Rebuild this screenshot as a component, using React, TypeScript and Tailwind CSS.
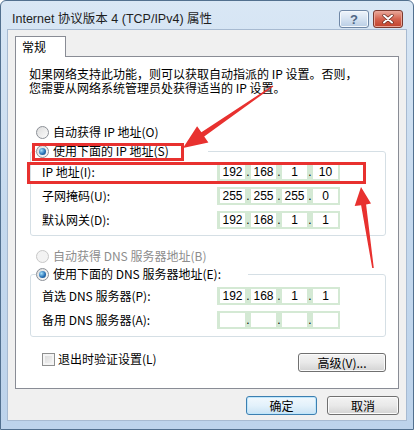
import React from "react";

function Radio({ checked, disabled }: { checked?: boolean; disabled?: boolean }) {
  return (
    <span
      className={
        disabled
          ? "flex h-[13px] w-[13px] shrink-0 items-center justify-center rounded-full border border-[#c8c8c8] bg-[#f3f3f3]"
          : "flex h-[13px] w-[13px] shrink-0 items-center justify-center rounded-full border border-[#8b8f96] bg-linear-to-br from-[#dcdcdc] to-[#fcfcfc]"
      }
    >
      {checked && (
        <span className="h-[7px] w-[7px] rounded-full bg-[radial-gradient(circle_at_35%_35%,#a6e1fb,#2a74b8_55%,#0e3f73)]" />
      )}
    </span>
  );
}

function IpField({ parts }: { parts: string[] }) {
  return (
    <div className="flex h-[18px] w-[123px] bg-[#d4e9d4] py-[2px] pl-[3px] pr-[2px] font-['Liberation_Sans',sans-serif] text-[12px] leading-[14px]">
      {parts.map((p, i) => (
        <React.Fragment key={i}>
          {i > 0 && <span className="flex w-[6px] items-center justify-center">.</span>}
          <span className="flex w-[25px] items-center justify-center bg-white">{p}</span>
        </React.Fragment>
      ))}
    </div>
  );
}

function Row({ label, parts }: { label: string; parts: string[] }) {
  return (
    <div className="flex h-[18px] items-center">
      <span className="w-[175px] whitespace-nowrap">{label}</span>
      <IpField parts={parts} />
    </div>
  );
}

function WinButton({ children, primary, className }: { children: React.ReactNode; primary?: boolean; className: string }) {
  return (
    <button
      className={
        (primary
          ? "border-[#3c7fb1] bg-linear-to-b from-[#f1f8fd] via-[#e3f1fb] to-[#c9e3f4] shadow-[inset_0_0_0_1px_#bfe6fb] "
          : "border-[#707070] bg-linear-to-b from-[#f3f3f3] via-[#e9e9e9] to-[#d3d3d3] shadow-[inset_0_0_0_1px_#fbfbfb] ") +
        "flex items-center justify-center rounded-[3px] border text-[12px] leading-[14px] text-black " +
        className
      }
    >
      {children}
    </button>
  );
}

export default function App() {
  return (
    <div className="relative flex h-[430px] w-[414px] flex-col overflow-hidden rounded-t-[6px] border border-[#52708f] bg-linear-to-b from-[#d9e7f5] via-[#c5d9ee] to-[#bdd3eb] font-['Noto_Sans_CJK_SC',sans-serif] text-[12px] text-black">
      {/* title bar */}
      <div className="flex h-[29px] shrink-0 justify-between pl-[11px] pr-[10px]">
        <div className="mt-[11px] whitespace-nowrap font-['Liberation_Sans','Noto_Sans_CJK_SC',sans-serif] text-[12.5px] leading-[14px] text-[#1e1e1e]">
          Internet 协议版本 4 (TCP/IPv4) 属性
        </div>
        <div className="mt-[9px] flex h-[18px] gap-[4px]">
          <div className="flex w-[30px] items-center justify-center rounded-[3px] border border-[#6f87a6] bg-linear-to-b from-[#eef4fb] via-[#d5e2f1] to-[#b9cde4] font-['Liberation_Sans',sans-serif] text-[13px] font-bold leading-none text-[#4f6684] shadow-[inset_0_0_0_1px_#f4f8fc]">
            ?
          </div>
          <div className="flex w-[30px] items-center justify-center rounded-[3px] border border-[#7a3a30] bg-linear-to-b from-[#e9a99c] via-[#d4634f] to-[#c0402b] shadow-[inset_0_0_0_1px_#eaa598]">
            <svg width="12" height="10" viewBox="0 0 12 10">
              <path d="M2 1.5 L10 8.5 M10 1.5 L2 8.5" stroke="#5b2219" strokeWidth="3.2" strokeLinecap="round" />
              <path d="M2 1.5 L10 8.5 M10 1.5 L2 8.5" stroke="#ffffff" strokeWidth="2" strokeLinecap="round" />
            </svg>
          </div>
        </div>
      </div>

      {/* client area */}
      <div className="mx-[7px] flex h-[390px] shrink-0 flex-col bg-[#f0f0f0] shadow-[0_0_0_1px_#a7bad1]">
        <div className="pl-[7px] pt-[6px]">
          <div className="relative z-10 -mb-px flex h-[21px] w-[51px] items-center border border-b-0 border-[#898c95] bg-white px-[6px] leading-[14px]">
            常规
          </div>
        </div>

        <div className="mx-[7px] flex h-[333px] flex-col border border-[#898c95] bg-white pl-[13px] pr-[12px] pt-[10px] leading-[14px]">
          <p className="whitespace-nowrap leading-[14px]">
            如果网络支持此功能，则可以获取自动指派的 IP 设置。否则，
            <br />
            您需要从网络系统管理员处获得适当的 IP 设置。
          </p>

          <div className="ml-[7px] mt-[28px] flex h-[18px] items-center gap-[4px]">
            <Radio />
            <span>自动获得 IP 地址(O)</span>
          </div>

          <fieldset className="ml-[1px] mt-[1px] rounded-[3px] border border-[#d5dfe5] p-0 pb-[6px]">
            <legend className="relative ml-[5px] flex h-[18px] w-[172px] items-center gap-[4px]">
              <Radio checked />
              <span>使用下面的 IP 地址(S)</span>
              <div className="absolute -left-[4px] top-[1px] h-[18px] w-[152px] border-[3px] border-[#e8312f]" />
            </legend>
            <div className="mt-[3px] flex flex-col gap-[6px] pl-[11px]">
              <div className="relative">
                <Row label="IP 地址(I):" parts={["192", "168", "1", "10"]} />
                <div className="absolute -left-[15px] -top-[1px] h-[22px] w-[339px] border-[3px] border-[#e8312f]" />
              </div>
              <Row label="子网掩码(U):" parts={["255", "255", "255", "0"]} />
              <Row label="默认网关(D):" parts={["192", "168", "1", "1"]} />
            </div>
          </fieldset>

          <div className="ml-[7px] mt-[11px] flex h-[18px] items-center gap-[4px] text-[#8d8d8d]">
            <Radio disabled />
            <span>自动获得 DNS 服务器地址(B)</span>
          </div>

          <fieldset className="ml-[1px] rounded-[3px] border border-[#d5dfe5] p-0 pb-[7px]">
            <legend className="ml-[5px] flex h-[18px] w-[212px] items-center gap-[4px]">
              <Radio checked />
              <span className="whitespace-nowrap">使用下面的 DNS 服务器地址(E):</span>
            </legend>
            <div className="mt-[4px] flex flex-col gap-[6px] pl-[11px]">
              <Row label="首选 DNS 服务器(P):" parts={["192", "168", "1", "1"]} />
              <Row label="备用 DNS 服务器(A):" parts={["", "", "", ""]} />
            </div>
          </fieldset>

          <div className="mt-[13px] flex items-start justify-between">
            <div className="ml-[13px] flex h-[18px] items-center gap-[3px]">
              <span className="h-[13px] w-[13px] border border-[#8e8f8f] bg-linear-to-br from-[#d6d6d6] to-[#f8f8f8] shadow-[inset_0_0_0_2px_#f4f4f4]" />
              <span>退出时验证设置(L)</span>
            </div>
            <WinButton className="mt-[3px] h-[19px] w-[88px]">高级(V)...</WinButton>
          </div>
        </div>

        <div className="mt-[7px] flex justify-end gap-[10px] pr-[7px]">
          <WinButton primary className="h-[19px] w-[71px]">确定</WinButton>
          <WinButton className="h-[19px] w-[72px]">取消</WinButton>
        </div>
      </div>

      {/* annotation arrows */}
      <svg className="pointer-events-none absolute -left-px -top-px" width="414" height="430" viewBox="0 0 414 430">
        <polygon
          fill="#e8312f"
          points="183,148 208.4,142.6 204.2,136.5 273.3,86.5 272.7,85.5 201.4,132.3 197.1,126.2"
        />
        <polygon
          fill="#e8312f"
          points="361,187 371,203.6 366.1,204.4 373.8,267.9 372.2,268.1 361.1,205.2 354.7,206"
        />
      </svg>
    </div>
  );
}
